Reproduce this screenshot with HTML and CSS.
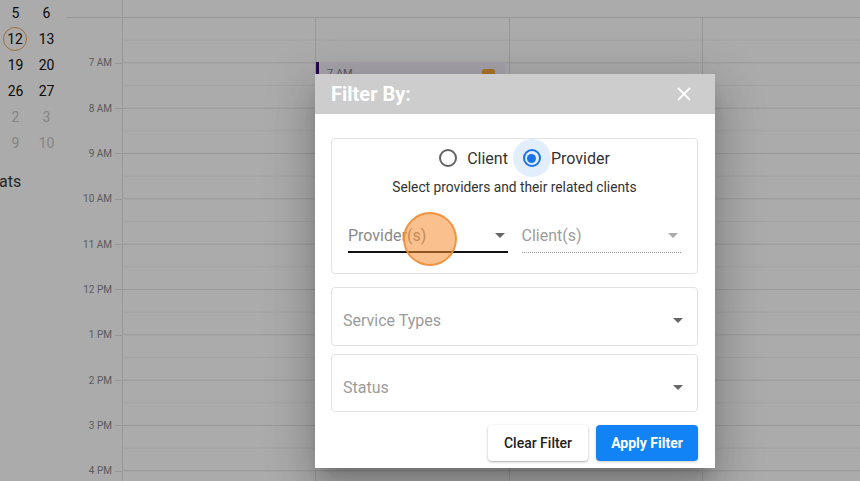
FILE: index.html
```html
<!DOCTYPE html>
<html lang="en">
<head>
<meta charset="utf-8">
<title>Calendar - Filter</title>
<link rel="stylesheet" href="styles.css">
</head>
<body>
<div class="page">
  <aside class="sidebar">
    <div class="mini-cal">
      <span>5</span><span>6</span>
      <span class="today">12</span><span>13</span>
      <span>19</span><span>20</span>
      <span>26</span><span>27</span>
      <span class="muted">2</span><span class="muted">3</span>
      <span class="muted">9</span><span class="muted">10</span>
    </div>
    <div class="side-label">ats</div>
  </aside>
  <main class="calendar">
    <div class="cal-head">
      <div class="head-gutter"></div>
      <div class="head-days"></div>
    </div>
    <div class="cal-body">
      <div class="gutter">
        <div class="hour"><span class="hlabel">7 AM<i class="tick"></i></span></div>
        <div class="hour"><span class="hlabel">8 AM<i class="tick"></i></span></div>
        <div class="hour"><span class="hlabel">9 AM<i class="tick"></i></span></div>
        <div class="hour"><span class="hlabel">10 AM<i class="tick"></i></span></div>
        <div class="hour"><span class="hlabel">11 AM<i class="tick"></i></span></div>
        <div class="hour"><span class="hlabel">12 PM<i class="tick"></i></span></div>
        <div class="hour"><span class="hlabel">1 PM<i class="tick"></i></span></div>
        <div class="hour"><span class="hlabel">2 PM<i class="tick"></i></span></div>
        <div class="hour"><span class="hlabel">3 PM<i class="tick"></i></span></div>
        <div class="hour"><span class="hlabel">4 PM<i class="tick"></i></span></div>
      </div>
      <div class="days">
        <div class="day"></div>
        <div class="day">
          <div class="event">
            <span class="event-time">7 AM</span>
            <span class="event-badge"></span>
          </div>
        </div>
        <div class="day"></div>
        <div class="day"></div>
      </div>
    </div>
  </main>
</div>

<div class="backdrop"></div>

<div class="dialog">
  <div class="dialog-head">
    <span class="dialog-title">Filter By:</span>
    <svg class="close" width="14" height="14" viewBox="0 0 14 14"><path d="M1 1L13 13M13 1L1 13" stroke="#fff" stroke-width="1.8" fill="none"/></svg>
  </div>
  <div class="dialog-body">
    <div class="box group">
      <div class="radios">
        <label class="radio"><span class="radio-btn"><span class="ring"></span></span><span class="radio-text">Client</span></label>
        <label class="radio checked"><span class="radio-btn"><span class="ring"><span class="dot"></span></span></span><span class="radio-text">Provider</span></label>
      </div>
      <p class="hint">Select providers and their related clients</p>
      <div class="selects">
        <div class="select active">
          <span class="ph">Provider(s)</span>
          <span class="caret"></span>
          <span class="cursor"></span>
        </div>
        <div class="select disabled">
          <span class="ph">Client(s)</span>
          <span class="caret"></span>
        </div>
      </div>
    </div>
    <div class="box field tall">
      <span class="ph">Service Types</span>
      <span class="caret"></span>
    </div>
    <div class="box field status">
      <span class="ph">Status</span>
      <span class="caret"></span>
    </div>
    <div class="actions">
      <button class="btn btn-light">Clear Filter</button>
      <button class="btn btn-primary">Apply Filter</button>
    </div>
  </div>
</div>
</body>
</html>
```

FILE: styles.css
```css
* { box-sizing: border-box; }
html, body { margin: 0; padding: 0; }
body {
  width: 860px;
  height: 481px;
  overflow: hidden;
  background: #fff;
  font-family: Roboto, "Liberation Sans", Arial, sans-serif;
  position: relative;
}

.page {
  display: flex;
  height: 481px;
}

/* sidebar */
.sidebar {
  width: 66px;
  flex: none;
  overflow: hidden;
}
.mini-cal {
  display: grid;
  grid-template-columns: 31px 31px;
  grid-auto-rows: 26px;
}
.mini-cal span {
  display: flex;
  align-items: center;
  justify-content: center;
  font-size: 14px;
  color: #111;
}
.mini-cal span.muted { color: #c6c6c6; }
.mini-cal span.today {
  width: 24px;
  height: 24px;
  margin: 1px 0 0 3px;
  border: 1.6px solid #eea64e;
  border-radius: 50%;
}
.side-label {
  margin-top: 17px;
  font-size: 16px;
  color: #3a3a3a;
  line-height: 18px;
  margin-left: -1px;
}

/* calendar */
.calendar {
  flex: 1;
  display: flex;
  flex-direction: column;
  min-width: 0;
}
.cal-head {
  height: 18px;
  display: flex;
  border-bottom: 1px solid #e3e3e3;
}
.head-gutter {
  width: 57px;
  border-right: 1px solid #e3e3e3;
}
.cal-body {
  flex: 1;
  display: flex;
}
.gutter {
  width: 57px;
  flex: none;
  border-right: 1px solid #e3e3e3;
}
.hour {
  height: 45.333px;
  display: flex;
  align-items: flex-end;
  justify-content: flex-end;
}
.hlabel {
  display: flex;
  align-items: center;
  gap: 3px;
  font-size: 10px;
  line-height: 12px;
  color: #8a8a8a;
  transform: translateY(50%);
}
.tick {
  display: block;
  width: 7px;
  height: 1px;
  background: #e3e3e3;
}
.days {
  display: grid;
  grid-template-columns: 192px 194px 193px 193px;
  background-image:
    linear-gradient(to bottom, transparent 44.333px, #e3e3e3 44.333px),
    linear-gradient(to bottom, transparent 22px, #f4f4f4 22px, #f4f4f4 23px, transparent 23px);
  background-size: 100% 45.333px, 100% 45.333px;
}
.day + .day { border-left: 1px solid #e3e3e3; }

.event {
  margin: 44px 4px 0 0;
  height: 44px;
  background: #f7f2fe;
  border-left: 3px solid #3a0b78;
  display: flex;
  justify-content: space-between;
  align-items: flex-start;
  padding: 5px 10px 0 8px;
}
.event-time {
  font-size: 11px;
  color: #8a8a8a;
}
.event-badge {
  width: 13px;
  height: 13px;
  margin-top: 2px;
  border-radius: 3px;
  background: #ffad3a;
}

/* backdrop */
.backdrop {
  position: absolute;
  inset: 0;
  background: rgba(0, 0, 0, 0.33);
}

/* dialog */
.dialog {
  position: absolute;
  left: 315px;
  top: 74px;
  width: 400px;
  background: #fff;
  box-shadow: 0 11px 15px -7px rgba(0,0,0,.2), 0 24px 38px 3px rgba(0,0,0,.14), 0 9px 46px 8px rgba(0,0,0,.12);
}
.dialog-head {
  height: 40px;
  background: #cdcdcd;
  display: flex;
  align-items: center;
  justify-content: space-between;
  padding: 0 24px 0 16px;
}
.dialog-title {
  color: #fff;
  font-size: 20px;
  font-weight: 700;
}
.close { display: block; }

.dialog-body {
  padding: 24px 17px 7px 16px;
  display: flex;
  flex-direction: column;
}
.box {
  border: 1px solid #e2e2e2;
  border-radius: 4px;
}
.group {
  height: 136px;
  padding: 0 16px;
}
.radios {
  display: flex;
  justify-content: center;
  height: 38px;
  padding-left: 15px;
}
.radio {
  display: flex;
  align-items: center;
  margin-right: 5px;
}
.radio-btn {
  width: 38px;
  height: 38px;
  border-radius: 50%;
  display: flex;
  align-items: center;
  justify-content: center;
}
.radio.checked .radio-btn { background: #e2eefc; }
.ring {
  width: 18px;
  height: 18px;
  border-radius: 50%;
  border: 2px solid #636363;
  display: flex;
  align-items: center;
  justify-content: center;
}
.radio.checked .ring { border-color: #1a73e8; }
.dot {
  width: 9px;
  height: 9px;
  border-radius: 50%;
  background: #1a73e8;
}
.radio-text {
  font-size: 16px;
  color: #333;
}
.hint {
  margin: 2px 0 0;
  text-align: center;
  font-size: 13.75px;
  line-height: 16px;
  color: #333;
}
.selects {
  display: flex;
  gap: 14px;
  margin-top: 21px;
}
.select {
  flex: 1;
  height: 37px;
  position: relative;
  display: flex;
  align-items: center;
  justify-content: space-between;
  padding: 3px 3px 0 0;
}
.select.active { border-bottom: 2px solid #111; }
.select.disabled { border-bottom: 1px dotted #9a9a9a; }
.ph {
  font-size: 16px;
  color: #8a8a8a;
}
.select.disabled .ph { color: #9c9c9c; }
.caret {
  width: 0;
  height: 0;
  border-left: 5px solid transparent;
  border-right: 5px solid transparent;
  border-top: 5px solid #666;
}
.select.disabled .caret { border-top-color: #aaa; }
.cursor {
  position: absolute;
  left: 55px;
  top: -4px;
  width: 54px;
  height: 54px;
  border-radius: 50%;
  background: rgba(246, 140, 50, 0.55);
  border: 2px solid rgba(240, 140, 50, 0.85);
}

.field {
  height: 58px;
  margin-top: 8px;
  display: flex;
  align-items: center;
  justify-content: space-between;
  padding: 7px 14px 0 11px;
}
.field.status { padding-top: 9px; }
.field .ph { color: #9b9b9b; }
.field.tall { height: 59px; margin-top: 13px; }

.actions {
  display: flex;
  justify-content: flex-end;
  gap: 8px;
  margin-top: 13px;
}
.btn {
  height: 36px;
  border: none;
  border-radius: 4px;
  font-family: inherit;
  font-size: 14px;
  cursor: pointer;
  padding: 0;
  line-height: 34px;
}
.btn-light {
  width: 100px;
  background: #fff;
  color: #222;
  font-weight: 500;
  box-shadow: 0 1px 3px rgba(0,0,0,.25), 0 1px 1px rgba(0,0,0,.1);
}
.btn-primary {
  width: 102px;
  background: #1283f5;
  color: #fff;
  font-weight: 700;
  box-shadow: 0 1px 3px rgba(0,0,0,.2);
}
```
